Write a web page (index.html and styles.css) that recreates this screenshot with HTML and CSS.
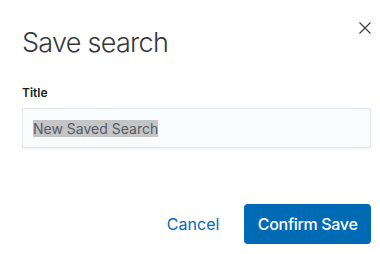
FILE: index.html
```html
<!DOCTYPE html>
<html>
<head>
<meta charset="utf-8">
<link rel="stylesheet" href="styles.css">
</head>
<body>
<div class="modal">
  <button class="close" aria-label="Close">
    <svg width="16" height="16" viewBox="0 0 16 16"><path d="M2.5 2.5l11 11M13.5 2.5l-11 11" stroke="#343741" stroke-width="1.1" fill="none"/></svg>
  </button>
  <div class="header"><h1 class="title">Save search</h1></div>
  <div class="body">
    <label class="label">Title</label>
    <div class="input"><span class="sel">New Saved Search</span></div>
  </div>
  <div class="footer">
    <button class="btn-empty">Cancel</button>
    <button class="btn-primary">Confirm Save</button>
  </div>
</div>
</body>
</html>
```
FILE: styles.css
```css
html, body {
  margin: 0;
  padding: 0;
  background: #fff;
  font-family: Inter, "Noto Sans", sans-serif;
  color: #1a1c21;
}
.modal {
  position: relative;
  width: 380px;
  height: 254px;
  box-sizing: border-box;
  padding: 25px 9px 10px 22px;
  display: flex;
  flex-direction: column;
}
.close {
  position: absolute;
  top: 20px;
  right: 7px;
  width: 16px;
  height: 16px;
  padding: 0;
  border: 0;
  background: none;
  display: flex;
}
.title {
  margin: 0;
  font-size: 27px;
  line-height: 36px;
  font-weight: 300;
  letter-spacing: -0.027em;
  color: #343741;
}
.body {
  margin-top: 24px;
  display: flex;
  flex-direction: column;
}
.label {
  font-size: 12px;
  line-height: 16px;
  font-weight: 600;
  color: #1a1c21;
  margin-bottom: 7px;
}
.input {
  height: 40px;
  box-sizing: border-box;
  background: #fbfcfd;
  box-shadow: 0 1px 1px -1px rgba(152,162,179,.2), 0 3px 2px -2px rgba(152,162,179,.2), inset 0 0 0 1px rgba(17,42,134,.1);
  padding: 0 11px;
  display: flex;
  align-items: center;
  font-size: 14px;
  line-height: 17px;
}
.sel {
  background: #c5c5c5;
  color: #565b66;
}
.footer {
  margin-top: auto;
  display: flex;
  justify-content: flex-end;
  align-items: center;
  gap: 13px;
}
.btn-empty, .btn-primary {
  font-family: Inter, "Noto Sans", sans-serif;
  font-size: 16px;
  font-weight: 500;
  height: 40px;
  border: 0;
  border-radius: 4px;
  cursor: pointer;
}
.btn-empty {
  background: none;
  color: #006bb4;
  padding: 0 12px;
  font-weight: 400;
}
.btn-primary {
  background: #006bb4;
  color: #fff;
  padding: 0 13.5px;
  letter-spacing: -0.02em;
}
```
